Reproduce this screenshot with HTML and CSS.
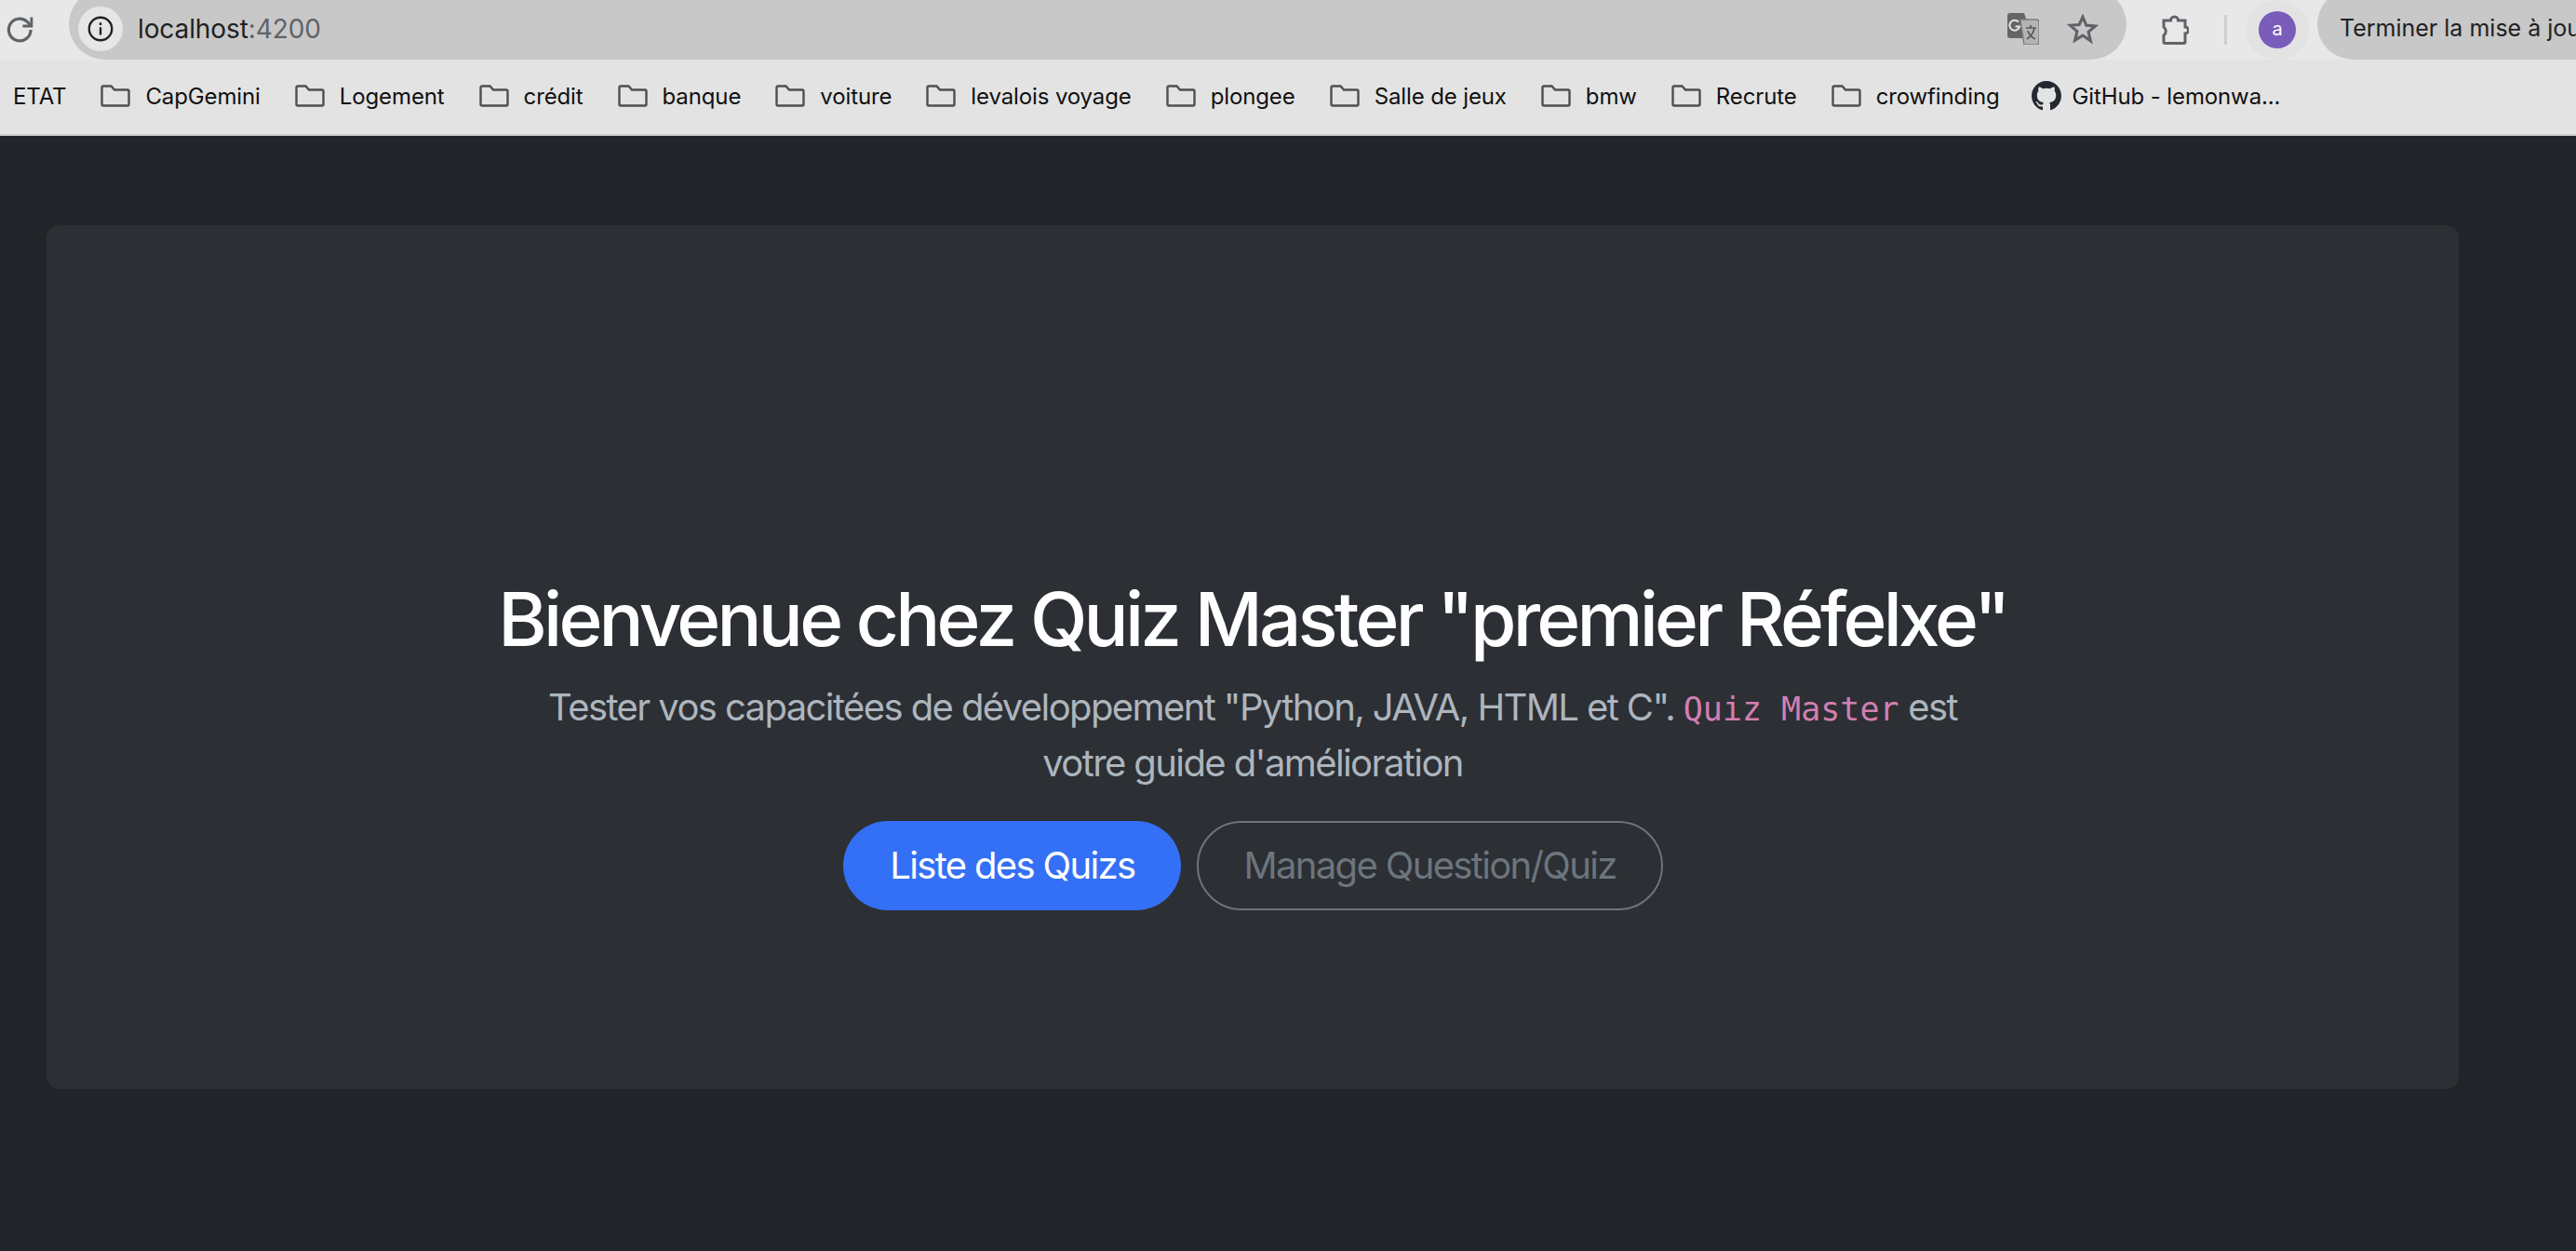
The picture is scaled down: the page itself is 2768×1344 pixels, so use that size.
FILE: index.html
```html
<!DOCTYPE html>
<html lang="fr">
<head>
  <meta charset="UTF-8">
  <title>Quiz Master</title>
  <link rel="stylesheet" href="styles.css">
</head>
<body>
  <header class="toolbar">
    <svg class="reload" viewBox="0 0 24 24" width="38" height="38" fill="none" stroke="#5f6368" stroke-width="2">
      <path d="M19 12a7.500 7.500 0 1 1-2.400-5.500L19 9"/>
      <path d="M19.500 3.500V9.500H13.500" stroke-width="1.800"/>
    </svg>
    <div class="omnibox">
      <span class="site-info">
        <svg viewBox="0 0 24 24" width="28" height="28" fill="none" stroke="#202124" stroke-width="2">
          <circle cx="12" cy="12" r="10.500"/>
          <path d="M12 10.500v7M12 6.300v2.200"/>
        </svg>
      </span>
      <span class="url">localhost<span class="url-port">:4200</span></span>
      <svg class="translate" viewBox="0 0 34 34" width="34" height="34">
        <path d="M3 0h15l9 27H3a3 3 0 0 1-3-3V3a3 3 0 0 1 3-3z" fill="#646568"/>
        <path d="M14 7h17a3 3 0 0 1 3 3v21a3 3 0 0 1-3 3H18z" fill="#b4b4b4" stroke="#7c7c7c" stroke-width="1.400"/>
        <path d="M12 9.500a5.500 5.500 0 1 0 1.200 5H8.500" fill="none" stroke="#e4e4e4" stroke-width="2"/>
        <path d="M20 16h11M25 13v3M29 16c-1 6-5 10-8 12M22 19c1 4 4 7 8 9" fill="none" stroke="#5a5a5a" stroke-width="1.600"/>
      </svg>
      <svg class="star" viewBox="0 0 24 24" width="34" height="34" fill="none" stroke="#5f6368" stroke-width="2.200">
        <path d="M12 3l2.700 6.300 6.800.6-5.200 4.500 1.600 6.700L12 17l-5.900 3.600 1.600-6.700-5.200-4.500 6.800-.6z"/>
      </svg>
    </div>
    <svg class="extension" viewBox="0 0 30 32" width="30" height="32" fill="none" stroke="#5f6368" stroke-width="3">
      <path d="M3 6h7.500a4 4 0 0 1 8 0H26v7a3.500 3.500 0 0 1 0 7v9a1.500 1.500 0 0 1-1.500 1.500H4.500A1.500 1.500 0 0 1 3 29v-7a5.500 5.500 0 0 0 0-9z"/>
    </svg>
    <span class="separator"></span>
    <span class="avatar-ring"><span class="avatar">a</span></span>
    <span class="update">Terminer la mise à jour</span>
  </header>

  <nav class="bookmarks">
    <span class="bookmark">ETAT</span>
    <span class="bookmark"><svg class="folder" viewBox="0 0 32 24"><use href="#folder-shape"/></svg>CapGemini</span>
    <span class="bookmark"><svg class="folder" viewBox="0 0 32 24"><use href="#folder-shape"/></svg>Logement</span>
    <span class="bookmark"><svg class="folder" viewBox="0 0 32 24"><use href="#folder-shape"/></svg>crédit</span>
    <span class="bookmark"><svg class="folder" viewBox="0 0 32 24"><use href="#folder-shape"/></svg>banque</span>
    <span class="bookmark"><svg class="folder" viewBox="0 0 32 24"><use href="#folder-shape"/></svg>voiture</span>
    <span class="bookmark"><svg class="folder" viewBox="0 0 32 24"><use href="#folder-shape"/></svg>levalois voyage</span>
    <span class="bookmark"><svg class="folder" viewBox="0 0 32 24"><use href="#folder-shape"/></svg>plongee</span>
    <span class="bookmark"><svg class="folder" viewBox="0 0 32 24"><use href="#folder-shape"/></svg>Salle de jeux</span>
    <span class="bookmark"><svg class="folder" viewBox="0 0 32 24"><use href="#folder-shape"/></svg>bmw</span>
    <span class="bookmark"><svg class="folder" viewBox="0 0 32 24"><use href="#folder-shape"/></svg>Recrute</span>
    <span class="bookmark"><svg class="folder" viewBox="0 0 32 24"><use href="#folder-shape"/></svg>crowfinding</span>
    <span class="bookmark bookmark-github">
      <svg class="github" viewBox="0 0 16 16" width="32" height="32" fill="#24292f">
        <path d="M8 0C3.580 0 0 3.580 0 8c0 3.540 2.290 6.530 5.470 7.590.4.070.55-.17.55-.38 0-.19-.01-.82-.01-1.490-2.010.37-2.530-.49-2.690-.94-.09-.23-.48-.94-.82-1.130-.28-.15-.68-.52-.01-.53.63-.01 1.080.58 1.230.82.72 1.210 1.870.87 2.330.66.07-.52.28-.87.51-1.070-1.780-.2-3.640-.89-3.640-3.950 0-.87.31-1.590.82-2.150-.08-.2-.36-1.020.08-2.120 0 0 .67-.21 2.200.82.64-.18 1.320-.27 2-.27s1.360.09 2 .27c1.530-1.040 2.200-.82 2.200-.82.44 1.100.16 1.920.08 2.120.51.56.82 1.270.82 2.150 0 3.070-1.870 3.750-3.650 3.950.29.25.54.73.54 1.480 0 1.070-.01 1.930-.01 2.200 0 .21.15.46.55.38A8.010 8.010 0 0 0 16 8c0-4.420-3.580-8-8-8z"/>
      </svg>GitHub - lemonwa...</span>
  </nav>

  <svg class="defs" width="0" height="0">
    <symbol id="folder-shape" viewBox="0 0 32 24">
      <path d="M1.500 3a1.500 1.500 0 0 1 1.500-1.500h8.500l3.500 4h14a1.500 1.500 0 0 1 1.500 1.500v14a1.500 1.500 0 0 1-1.500 1.500H3A1.500 1.500 0 0 1 1.500 21z" fill="none" stroke="#4f4f4f" stroke-width="2.400"/>
    </symbol>
  </svg>

  <main class="page">
    <section class="hero">
      <h1 class="hero-title">Bienvenue chez Quiz Master "premier Réfelxe"</h1>
      <p class="hero-text">Tester vos capacitées de développement "Python, JAVA, HTML et C". <code class="hero-code">Quiz Master</code> est votre guide d'amélioration</p>
      <div class="hero-actions">
        <a class="btn btn-primary">Liste des Quizs</a>
        <a class="btn btn-outline">Manage Question/Quiz</a>
      </div>
    </section>
  </main>
</body>
</html>
```

FILE: styles.css
```css
* {
  box-sizing: border-box;
}

html, body {
  height: 100%;
}

body {
  margin: 0;
  overflow: hidden;
  background-color: #212529;
  font-family: Inter, "Liberation Sans", sans-serif;
}

/* browser chrome */
.toolbar {
  display: flex;
  align-items: center;
  height: 64px;
  overflow: hidden;
  background-color: #e8e8e8;
}

.reload {
  flex: none;
  margin-left: 3px;
}

.omnibox {
  display: flex;
  flex: none;
  align-items: center;
  width: 2211px;
  height: 76px;
  margin: -12px 0 0 33px;
  padding: 10px 30px 0 10px;
  background-color: #c8c8c8;
  border-radius: 38px;
}

.site-info {
  display: flex;
  flex: none;
  align-items: center;
  justify-content: center;
  width: 48px;
  height: 48px;
  background-color: #e6e6e6;
  border-radius: 50%;
}

.url {
  flex: 1;
  margin-left: 16px;
  color: #202124;
  font-size: 28px;
  letter-spacing: -0.1px;
}

.url-port {
  color: #5f6368;
}

.translate {
  flex: none;
}

.star {
  flex: none;
  margin-left: 30px;
}

.extension {
  flex: none;
  margin-left: 37px;
}

.separator {
  flex: none;
  width: 3px;
  height: 32px;
  margin-left: 38px;
  background-color: #cfcfcf;
}

.avatar-ring {
  display: flex;
  flex: none;
  align-items: center;
  justify-content: center;
  width: 68px;
  height: 64px;
  margin-left: 20px;
  background-color: #e3e3e3;
  border-radius: 50%;
}

.avatar {
  width: 40px;
  height: 40px;
  color: #fff;
  font-size: 20px;
  line-height: 38px;
  text-align: center;
  background-color: #7a5cbb;
  border-radius: 50%;
}

.update {
  flex: none;
  height: 76px;
  margin: -12px 0 0 9px;
  padding: 10px 40px 0 24px;
  color: #202124;
  font-size: 25px;
  line-height: 64px;
  white-space: nowrap;
  background-color: #c8c8c8;
  border-radius: 38px;
}

.bookmarks {
  display: flex;
  align-items: center;
  gap: 37px;
  height: 82px;
  padding: 0 0 2px 14px;
  color: #111;
  font-size: 24px;
  letter-spacing: -0.12px;
  background-color: #e3e3e3;
  border-bottom: 2px solid #cbcbcb;
}

.bookmark {
  display: flex;
  align-items: center;
  gap: 16px;
  white-space: nowrap;
}

.bookmark-github {
  gap: 12px;
  margin-left: -3px;
}

.folder {
  flex: none;
  width: 32px;
  height: 24px;
}

.github {
  flex: none;
}

.defs {
  position: absolute;
}

/* page */
.page {
  padding: 96px 126px 0 50px;
}

.hero {
  display: flex;
  flex-direction: column;
  align-items: center;
  justify-content: flex-end;
  height: 928px;
  padding-bottom: 192px;
  text-align: center;
  background-color: #2c2f34;
  border-radius: 14px;
}

.hero-title {
  margin: 0 0 17px;
  color: #fff;
  font-size: 80px;
  font-weight: 500;
  line-height: 96px;
  letter-spacing: -3.800px;
}

.hero-text {
  width: 1560px;
  margin: 0 0 32px;
  color: #adb5bd;
  font-size: 40px;
  line-height: 60px;
  letter-spacing: -1.600px;
}

.hero-code {
  color: #d27fb0;
  font-family: "DejaVu Sans Mono", "Liberation Mono", monospace;
  font-size: 35px;
  line-height: 1;
  letter-spacing: 0;
}

.hero-actions {
  display: flex;
  gap: 17px;
  margin-right: -1px;
}

.btn {
  height: 96px;
  padding: 0 48px;
  font-size: 40px;
  line-height: 92px;
  letter-spacing: -1.650px;
  border: 2px solid transparent;
  border-radius: 48px;
}

.btn-primary {
  color: #fff;
  background-color: #3470f5;
}

.btn-outline {
  color: #6c757d;
  border-color: #6c757d;
}
```
